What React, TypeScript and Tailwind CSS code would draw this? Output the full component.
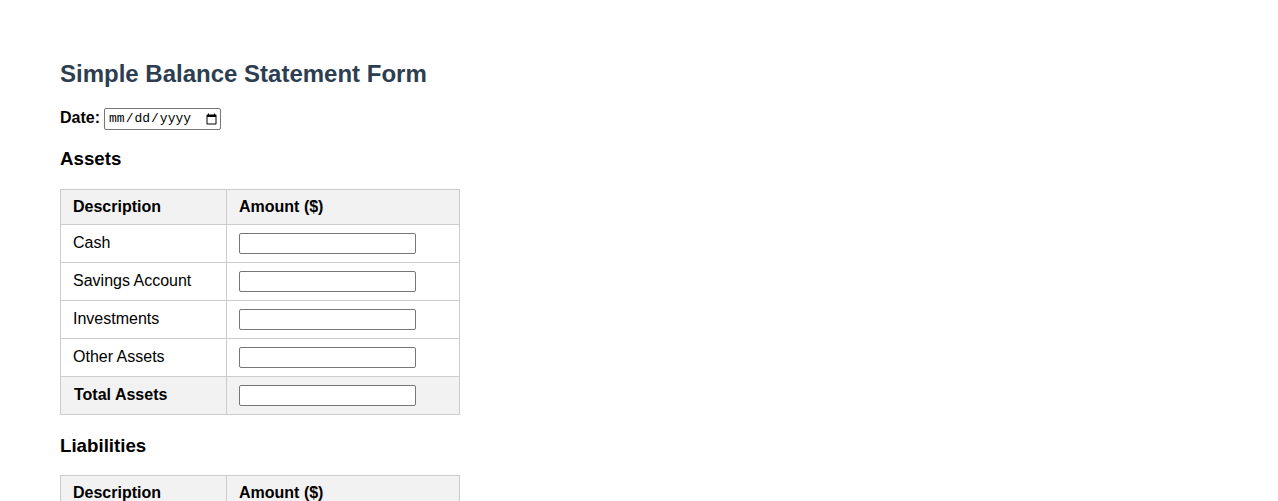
import React from "react";

const assets = ["Cash", "Savings Account", "Investments", "Other Assets"];
const liabilities = ["Credit Card Debt", "Loans", "Other Liabilities"];

function AmountInput() {
  return (
    <input
      type="text"
      className="block w-[177px] h-[21px] border border-[#767676] rounded-[2px] bg-white px-[2px] text-[13px]"
    />
  );
}

function Section({
  title,
  rows,
  totalLabel,
  first,
}: {
  title: string;
  rows: string[];
  totalLabel: string;
  first?: boolean;
}) {
  return (
    <div className="flex flex-col">
      <h3
        className={
          first
            ? "text-[18.72px] font-bold leading-[22px] mt-[18px] mb-[19px]"
            : "text-[18.72px] font-bold leading-[22px] mt-[20px] mb-[18px]"
        }
      >
        {title}
      </h3>
      <table className="w-[400px] border-collapse text-[16px] leading-[18px]">
        <thead>
          <tr className="bg-[#f2f2f2]">
            <th className="w-[166px] border border-[#ccc] px-3 py-2 text-left font-bold">Description</th>
            <th className="border border-[#ccc] px-3 py-2 text-left font-bold">Amount ($)</th>
          </tr>
        </thead>
        <tbody>
          {rows.map((r) => (
            <tr key={r}>
              <td className="border border-[#ccc] px-3 pt-[7px] pb-[9px]">{r}</td>
              <td className="border border-[#ccc] px-3 py-2">
                <AmountInput />
              </td>
            </tr>
          ))}
          <tr className="bg-[#f2f2f2]">
            <td className="border border-[#ccc] px-3 pt-[7px] pb-[9px] font-bold">
              <span className="pl-px">{totalLabel}</span>
            </td>
            <td className="border border-[#ccc] px-3 py-2">
              <AmountInput />
            </td>
          </tr>
        </tbody>
      </table>
    </div>
  );
}

export default function App() {
  return (
    <div
      className="min-h-screen bg-white text-black px-[60px] py-10"
      style={{ fontFamily: "'Liberation Sans', Arial, sans-serif" }}
    >
      <h2 className="mt-5 mb-5 text-[24px] font-bold leading-[28px] text-[#2c3e50]">
        Simple Balance Statement Form
      </h2>
      <div className="flex items-center gap-[4px] h-[22px]">
        <label className="text-[16px] font-bold leading-[18px] -mt-[2px]">Date:</label>
        <input
          type="date"
          className="w-[117px] h-[22px] border border-[#767676] rounded-[2px] bg-white pl-[3px] text-[13px] leading-[16px]"
          style={{ fontFamily: "'Liberation Mono', monospace" }}
        />
      </div>
      <Section title="Assets" rows={assets} totalLabel="Total Assets" first />
      <Section title="Liabilities" rows={liabilities} totalLabel="Total Liabilities" />
    </div>
  );
}
